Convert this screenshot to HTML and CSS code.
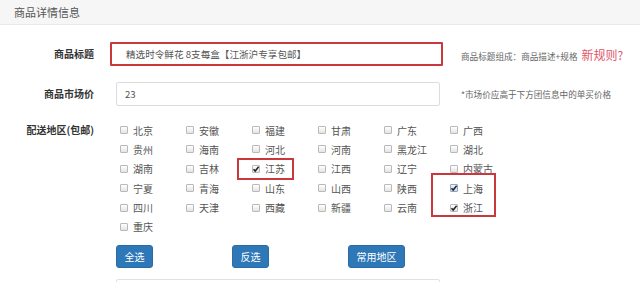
FILE: index.html
```html
<!DOCTYPE html>
<html lang="zh-CN">
<head>
    <meta charset="UTF-8">
    <meta name="viewport" content="width=device-width, initial-scale=1.0">
    <title>商品详情信息</title>
    <link rel="stylesheet" href="styles.css">
</head>
<body>
    <div class="panel">
        <div class="panel-heading">商品详情信息</div>

        <div class="panel-body">
            <div class="form-row">
                <label class="form-label">商品标题</label>
                <div class="field">
                    <input type="text" class="form-input input-marked" value="精选时令鲜花 8支每盒【江浙沪专享包邮】">
                </div>
                <div class="hint">商品标题组成：商品描述+规格 <span class="hint-link">新规则?</span></div>
            </div>

            <div class="form-row">
                <label class="form-label">商品市场价</label>
                <div class="field">
                    <input type="text" class="form-input" value="23">
                </div>
                <div class="hint">*市场价应高于下方团信息中的单买价格</div>
            </div>

            <div class="form-row form-row-top">
                <label class="form-label">配送地区(包邮)</label>
                <div class="field">
                    <div class="region-grid">
                        <div class="region"><span class="box"></span>北京</div>
                        <div class="region"><span class="box"></span>安徽</div>
                        <div class="region"><span class="box"></span>福建</div>
                        <div class="region"><span class="box"></span>甘肃</div>
                        <div class="region"><span class="box"></span>广东</div>
                        <div class="region"><span class="box"></span>广西</div>

                        <div class="region"><span class="box"></span>贵州</div>
                        <div class="region"><span class="box"></span>海南</div>
                        <div class="region"><span class="box"></span>河北</div>
                        <div class="region"><span class="box"></span>河南</div>
                        <div class="region"><span class="box"></span>黑龙江</div>
                        <div class="region"><span class="box"></span>湖北</div>

                        <div class="region"><span class="box"></span>湖南</div>
                        <div class="region"><span class="box"></span>吉林</div>
                        <div class="region mark-single"><span class="box checked"><svg viewBox="0 0 8 8"><path d="M1.5 4.2 L3.2 6 L6.6 1.8" /></svg></span>江苏</div>
                        <div class="region"><span class="box"></span>江西</div>
                        <div class="region"><span class="box"></span>辽宁</div>
                        <div class="region"><span class="box"></span>内蒙古</div>

                        <div class="region"><span class="box"></span>宁夏</div>
                        <div class="region"><span class="box"></span>青海</div>
                        <div class="region"><span class="box"></span>山东</div>
                        <div class="region"><span class="box"></span>山西</div>
                        <div class="region"><span class="box"></span>陕西</div>
                        <div class="region mark-double"><span class="box checked focus"><svg viewBox="0 0 8 8"><path d="M1.5 4.2 L3.2 6 L6.6 1.8" /></svg></span>上海</div>

                        <div class="region"><span class="box"></span>四川</div>
                        <div class="region"><span class="box"></span>天津</div>
                        <div class="region"><span class="box"></span>西藏</div>
                        <div class="region"><span class="box"></span>新疆</div>
                        <div class="region"><span class="box"></span>云南</div>
                        <div class="region"><span class="box checked"><svg viewBox="0 0 8 8"><path d="M1.5 4.2 L3.2 6 L6.6 1.8" /></svg></span>浙江</div>

                        <div class="region"><span class="box"></span>重庆</div>
                    </div>

                    <div class="btn-row">
                        <button class="btn">全选</button>
                        <button class="btn">反选</button>
                        <button class="btn">常用地区</button>
                    </div>

                    <input type="text" class="form-input next-input">
                </div>
            </div>
        </div>
    </div>
</body>
</html>
```

FILE: styles.css
```css
:root {
    --text-main: #333333;
    --text-muted: #555555;
    --border-color: #dcdcdc;
    --mark-red: #c8383c;
    --btn-blue: #2f78b8;
}

body {
    margin: 0;
    background: #ffffff;
    font-family: "Noto Sans CJK SC", "Noto Sans", sans-serif;
    color: var(--text-main);
}

.panel-heading {
    height: 24px;
    line-height: 24px;
    padding-left: 14px;
    background: #f6f6f6;
    border-bottom: 1px solid #e8e8e8;
    font-size: 11px;
    color: var(--text-muted);
}

.panel-body {
    padding-top: 17px;
}

.form-row {
    display: flex;
    align-items: center;
    margin-bottom: 16px;
}

.form-row-top {
    align-items: flex-start;
    margin-top: -1.7px;
}

.form-label {
    width: 94px;
    flex-shrink: 0;
    text-align: right;
    font-size: 10px;
    font-weight: bold;
    line-height: 19.4px;
    color: var(--text-main);
}

.field {
    width: 324px;
    margin-left: 22px;
    flex-shrink: 0;
}

.form-input {
    display: block;
    box-sizing: border-box;
    width: 100%;
    height: 24px;
    padding: 0 8px;
    border: 1px solid var(--border-color);
    border-radius: 2px;
    font-family: inherit;
    font-size: 9.6px;
    color: var(--text-muted);
    background: #ffffff;
}

.input-marked {
    width: calc(100% + 9px);
    margin-left: -6px;
    padding-left: 14px;
    border: 2px solid var(--mark-red);
    border-radius: 1px;
}

.hint {
    margin-left: 21px;
    font-size: 8.6px;
    color: #666666;
    white-space: nowrap;
}

.hint-link {
    margin-left: 2px;
    font-size: 12px;
    color: #e0566a;
}

.region-grid {
    display: grid;
    grid-template-columns: repeat(6, 66px);
    grid-auto-rows: 19.4px;
    padding-left: 4px;
}

.region {
    position: relative;
    display: flex;
    align-items: center;
    font-size: 10px;
    color: var(--text-muted);
    white-space: nowrap;
}

.box {
    display: inline-flex;
    box-sizing: border-box;
    width: 8px;
    height: 8px;
    margin-right: 5px;
    border: 1px solid #b9b9b9;
    border-radius: 1px;
    background: linear-gradient(#ffffff, #e4e4e4);
}

.box svg {
    width: 8px;
    height: 8px;
    margin: -1px;
    fill: none;
    stroke: #222222;
    stroke-width: 1.5;
}

.box.focus {
    border-color: #8fa6c8;
    background: linear-gradient(#eef3fb, #cdd9ea);
}

.mark-single::after,
.mark-double::after {
    content: "";
    position: absolute;
    box-sizing: border-box;
    border: 2px solid var(--mark-red);
}

.mark-single::after {
    left: -15px;
    top: -1px;
    width: 57px;
    height: 22px;
}

.mark-double::after {
    left: -19px;
    top: -5px;
    width: 65px;
    height: 44px;
}

.btn-row {
    display: flex;
    gap: 79px;
    margin-top: 8px;
}

.btn {
    box-sizing: border-box;
    height: 23px;
    padding: 0 7.5px;
    border: 1px solid #2b6ca6;
    border-radius: 3px;
    background: var(--btn-blue);
    color: #ffffff;
    font-family: inherit;
    font-size: 10px;
}

.next-input {
    margin-top: 11px;
    border-color: #e2e2e2;
}
```
